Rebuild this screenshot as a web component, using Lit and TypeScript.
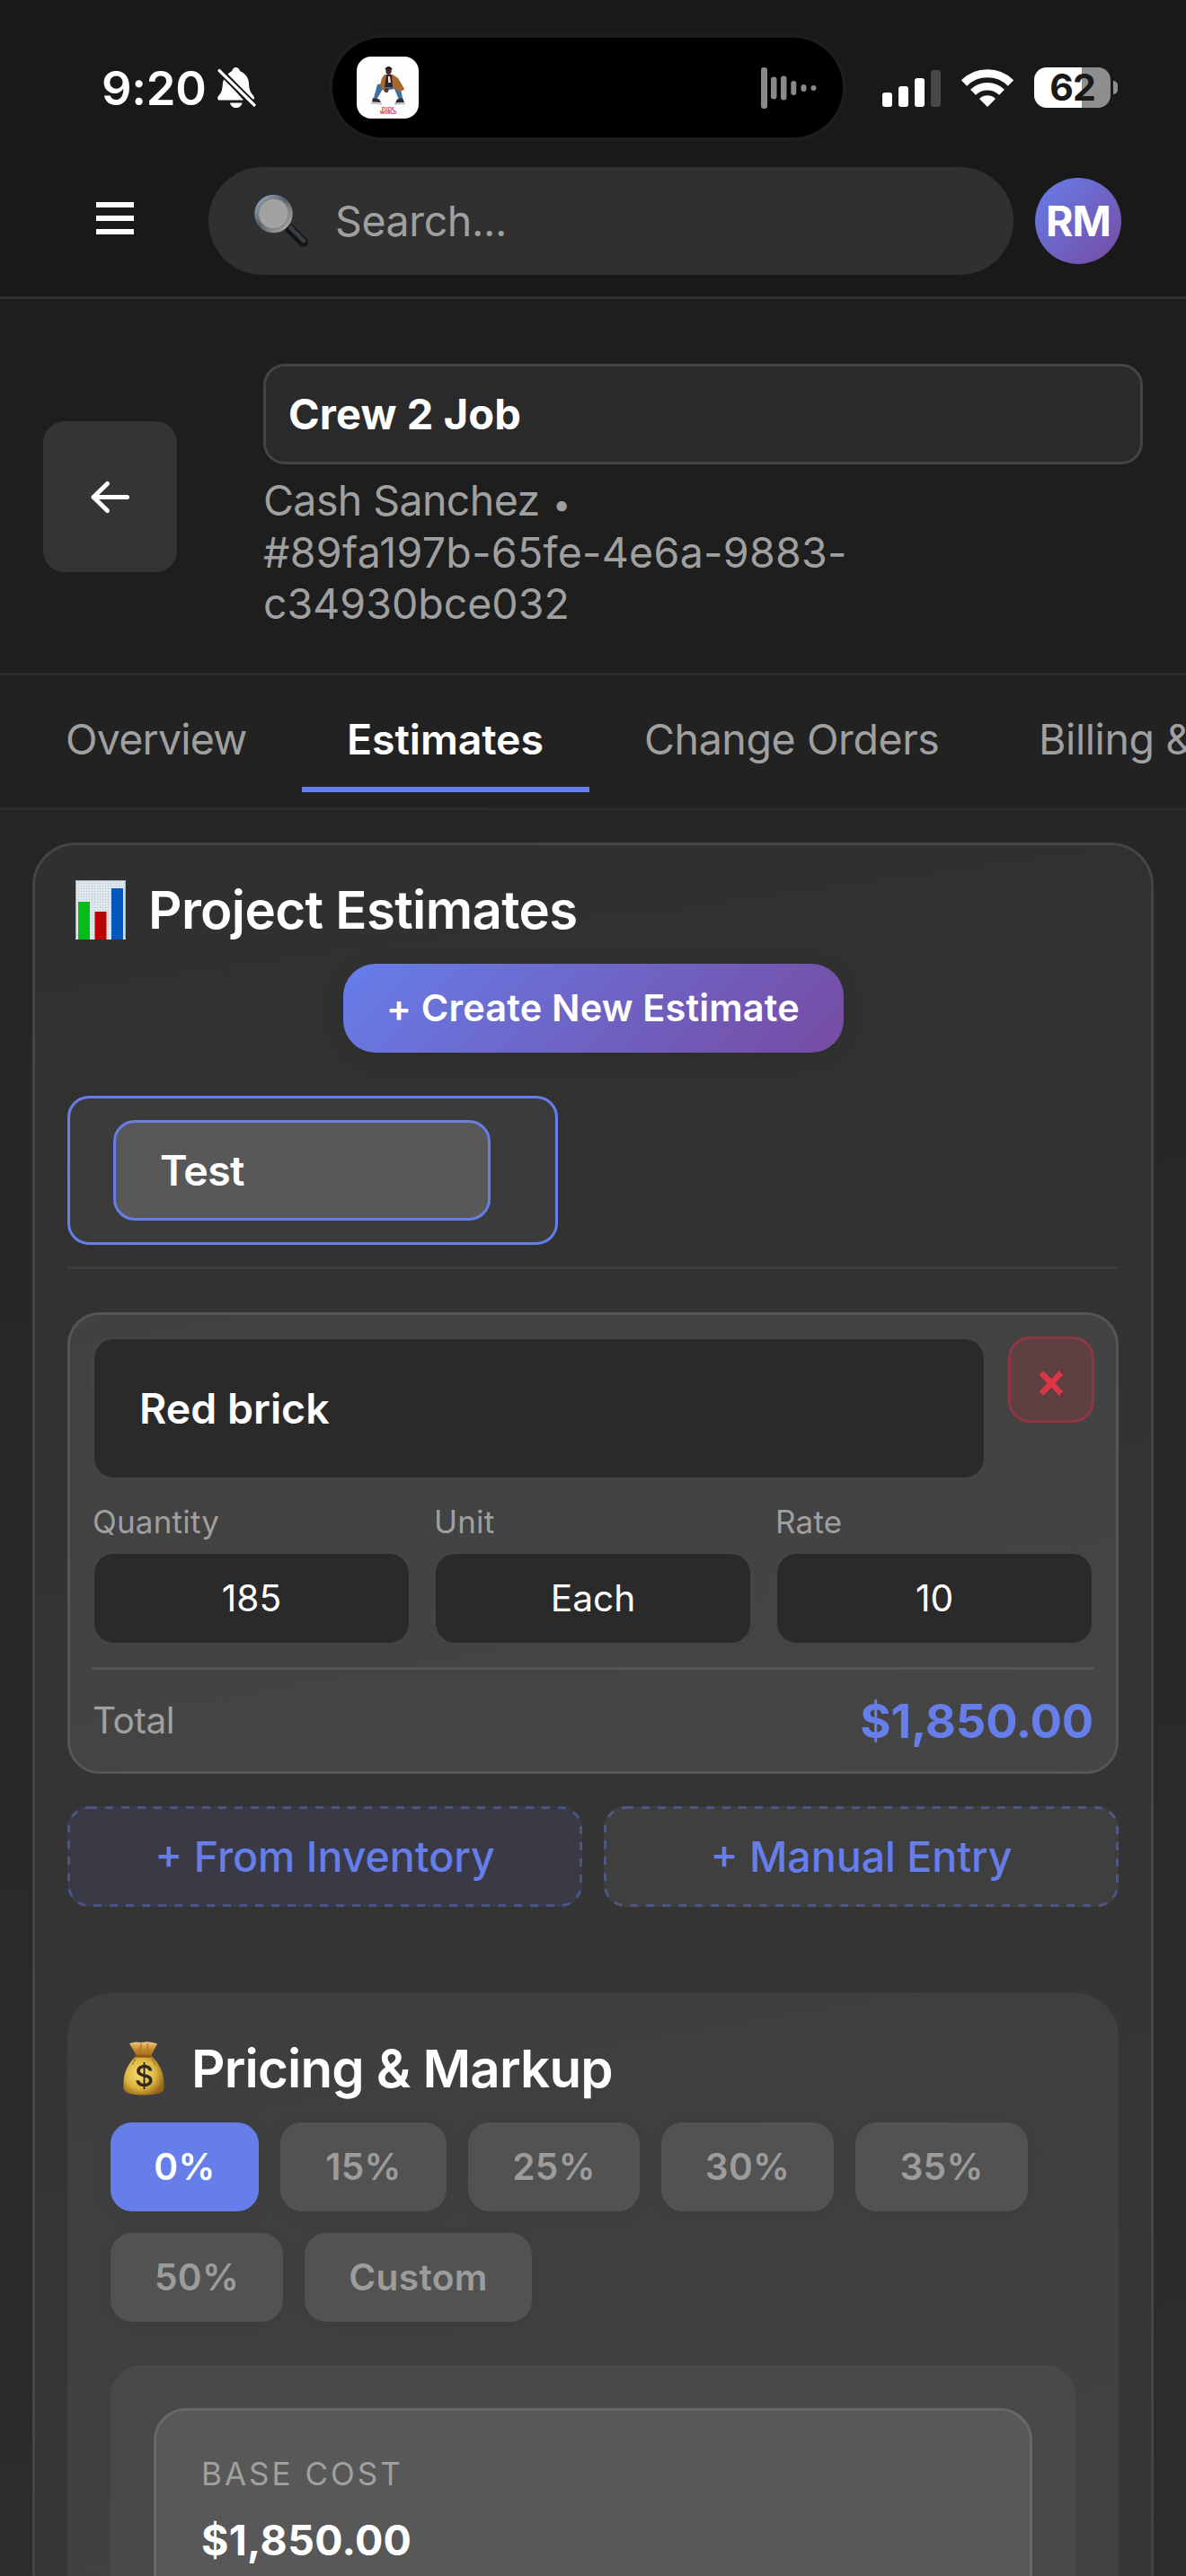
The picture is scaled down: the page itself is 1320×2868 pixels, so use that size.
import { LitElement, html, css, svg } from "lit";
import { customElement, property } from "lit/decorators.js";
import { classMap } from "lit/directives/class-map.js";

const base = css`
  *, *::before, *::after { box-sizing: border-box; }
  :host {
    display: block;
    font-family: Inter, "Liberation Sans", sans-serif;
    color: #fff;
    white-space: nowrap;
  }
  svg { display: block; flex: none; overflow: visible; }
`;

const bellOff = svg`
  <svg width="43" height="45" viewBox="0 0 43 45" fill="#fff">
    <path d="M6 17C6.500 15 6.900 13.600 7.500 12.500L29 36.500H2.500C0 36.500-.5 33.500 1.200 31.700C4.500 28.500 5.500 25 6 17Z"/>
    <path d="M11.500 7.500C13 6 14.500 5 16 4.200C17 1.500 18.500 0 20.500 0C22.500 0 24.200 1.500 25.200 4.200C31.500 6.800 34.800 12 35 18C35.300 25 37 28.500 40 31.500C41 32.600 41.200 33.800 40.800 35L39.500 36Z"/>
    <path d="M14 39.500H27.500C27 43 24 45 20.700 45C17.500 45 14.500 43 14 39.500Z"/>
    <path d="M2 3.500L41 42" stroke="#191919" stroke-width="7"/>
    <path d="M2 3.500L41 42" stroke="#fff" stroke-width="3.200" stroke-linecap="round"/>
  </svg>`;

const albumArt = svg`
  <svg width="69" height="69" viewBox="0 0 69 69">
    <rect width="69" height="69" rx="16" fill="#fdfdfd"/>
    <path d="M23 31L19 46L22 48L29 36L36 37L42 36L47 48L51 46L48 31L40 30H30Z" fill="#3c6f9f"/>
    <path d="M31 20L28 24L26 32L30 38L33 38L32 33H39L47 39L53 37L52 34L46 24L40 20Z" fill="#a8672c"/>
    <path d="M33 20H39L40 34H31Z" fill="#2e2430"/>
    <path d="M35 22H37L38 29H35Z" fill="#e9dfdd"/>
    <ellipse cx="35.500" cy="15.500" rx="3.200" ry="4.500" fill="#4a2d26"/>
    <path d="M31.500 14C31.500 10.500 40 10.500 39.500 14.500Z" fill="#211c22"/>
    <ellipse cx="33" cy="37.500" rx="2.500" ry="2.500" fill="#5a3528"/>
    <path d="M18 46L25 47.500L27 51L17 50.500Z" fill="#2d2a33"/>
    <path d="M45 47.500L51 46L53 51L43 51.500Z" fill="#2d2a33"/>
    <path d="M16 52L28 52.500M42 53L54 52" stroke="#b9b6b8" stroke-width="1.600"/>
    <text x="35" y="59.500" font-size="5" font-weight="800" text-anchor="middle" fill="#d84a52">FUCK</text>
    <text x="35" y="64" font-size="5" font-weight="800" text-anchor="middle" fill="#d84a52">WORLD</text>
  </svg>`;

const waveform = svg`
  <svg width="62" height="46" viewBox="0 0 62 46" fill="#8a8888">
    <rect x="0" y="0" width="7" height="46" rx="3"/>
    <rect x="11" y="10.500" width="6.500" height="25" rx="3.200"/>
    <rect x="22" y="9.500" width="6.500" height="27" rx="3.200"/>
    <rect x="33.300" y="15" width="6" height="16" rx="3"/>
    <rect x="44.500" y="19" width="6" height="8" rx="3"/>
    <circle cx="58.500" cy="23" r="3"/>
  </svg>`;

const signalBars = svg`
  <svg width="65" height="42" viewBox="0 0 65 42" fill="#fff">
    <rect x="0" y="26" width="11" height="16" rx="3"/>
    <rect x="18" y="19" width="11" height="23" rx="3"/>
    <rect x="36" y="10" width="11" height="32" rx="3"/>
    <rect x="54" y="1" width="11" height="41" rx="3" fill="#484848"/>
  </svg>`;

const wifi = svg`
  <svg width="58" height="42" viewBox="0 0 58 42" fill="none" stroke="#fff">
    <path d="M3 15.500A37 37 0 0 1 55 15.500" stroke-width="9"/>
    <path d="M13 25.700A23 23 0 0 1 45 25.700" stroke-width="8.500"/>
    <path d="M29 41L21 33A12 12 0 0 1 37 33Z" fill="#fff" stroke-width="1.500" stroke-linejoin="round"/>
  </svg>`;

const magnifier = svg`
  <svg width="60" height="58" viewBox="0 0 60 58">
    <defs>
      <linearGradient id="rim" x1="0" y1="0" x2="1" y2="1">
        <stop offset="0" stop-color="#9ab4c8"/><stop offset=".45" stop-color="#56606a"/><stop offset="1" stop-color="#b5b5b5"/>
      </linearGradient>
      <linearGradient id="grip" x1="0" y1="1" x2="1" y2="0">
        <stop offset="0" stop-color="#101214"/><stop offset=".5" stop-color="#3c4246"/><stop offset="1" stop-color="#0c0d0e"/>
      </linearGradient>
    </defs>
    <path d="M36 34L42 39" stroke="#777" stroke-width="6"/>
    <path d="M39.500 37.500L54.500 52.500" stroke="#111315" stroke-width="10.500" stroke-linecap="round"/>
    <path d="M40.500 36.500L55 51" stroke="url(#grip)" stroke-width="5" stroke-linecap="round"/>
    <circle cx="21.500" cy="21" r="19.200" fill="#a2a2a2" stroke="url(#rim)" stroke-width="4"/>
    <circle cx="21.500" cy="21" r="16.800" fill="none" stroke="#7b7f82" stroke-width="1.200"/>
  </svg>`;

const chartIcon = svg`
  <svg width="56" height="66" viewBox="0 0 56 66">
    <defs>
      <pattern id="grid" width="3" height="3" patternUnits="userSpaceOnUse">
        <rect width="3" height="3" fill="#e6ebef"/><path d="M0 0H3M0 0V3" stroke="#c0d0dc" stroke-width="1"/>
      </pattern>
    </defs>
    <rect width="56" height="66" fill="url(#grid)"/>
    <path d="M.5 65.500V.5H55.500V65.500" fill="none" stroke="#a9afb3"/>
    <rect x="3" y="24" width="13" height="42" fill="#06bc19"/>
    <rect x="21.500" y="35" width="13" height="31" fill="#ba0404"/>
    <rect x="40" y="9" width="13" height="57" fill="#0557bd"/>
  </svg>`;

const moneyBag = svg`
  <svg width="46" height="60" viewBox="0 0 46 60">
    <defs>
      <radialGradient id="bag" cx=".42" cy=".45" r=".62">
        <stop offset="0" stop-color="#f5e07a"/><stop offset=".6" stop-color="#dfb640"/><stop offset="1" stop-color="#94661a"/>
      </radialGradient>
      <linearGradient id="neck" x1="0" y1="0" x2="0" y2="1">
        <stop offset="0" stop-color="#efc98a"/><stop offset=".5" stop-color="#c98b2c"/><stop offset="1" stop-color="#a0661c"/>
      </linearGradient>
    </defs>
    <path d="M7 2L14 .5L20 1L27 .3L33 1L38 2.500L31 16H15Z" fill="url(#neck)"/>
    <path d="M15 16H31C39 22 45.500 34 45.500 46V52C45.500 57 37 59.500 23 59.500C9 59.500 .5 57 .5 52V46C.5 34 7 22 15 16Z" fill="url(#bag)"/>
    <path d="M14.500 16.500H31.500" stroke="#8a5a1c" stroke-width="2.500" stroke-linecap="round"/>
    <path d="M20 2L19 13M27 2L28 13M10 26L14 19M36 26L32 19" stroke="#a8722a" stroke-width="1.200"/>
    <text x="23" y="50" text-anchor="middle" font-family="Inter, sans-serif" font-size="33" font-weight="500" fill="#33291a">$</text>
  </svg>`;

const dashedFrame = svg`
  <svg class="frame" width="573" height="112" viewBox="0 0 573 112" fill="none">
    <rect x="1.500" y="1.500" width="570" height="109" rx="22.500" stroke="#667eea" stroke-opacity=".4" stroke-width="3" stroke-dasharray="9 9"/>
  </svg>`;

@customElement("status-bar")
class StatusBar extends LitElement {
  static styles = [base, css`
    .bar { display: flex; height: 186px; padding-top: 42px; align-items: flex-start; }
    .left { width: 370px; height: 111px; padding-left: 113px; display: flex; align-items: center; gap: 13px; }
    .time { font-size: 52.5px; font-weight: 600; letter-spacing: -0.3px; width: 116px; }
    .island {
      width: 568px; height: 111px; border-radius: 56px; background: #000; box-shadow: 0 0 0 4px #1d1d1d;
      display: flex; align-items: center; justify-content: space-between; padding: 0 29px 0 27px;
    }
    .right { height: 111px; display: flex; align-items: center; padding-left: 44px; gap: 23px; }
    .battery { display: flex; align-items: center; gap: 3px; }
    .cell {
      width: 85px; height: 45px; border-radius: 14px; background: linear-gradient(90deg, #fff 62%, #8e8e8e 62%);
      color: #191919; font-size: 41px; font-weight: 700; line-height: 45px; text-align: center; letter-spacing: -1px;
    }
    .nub { width: 5px; height: 15px; border-radius: 0 5px 5px 0; background: #8e8e8e; }
  `];
  render() {
    return html`<div class="bar">
      <div class="left"><span class="time">9:20</span>${bellOff}</div>
      <div class="island">${albumArt}${waveform}</div>
      <div class="right">${signalBars}${wifi}
        <div class="battery"><div class="cell">62</div><div class="nub"></div></div>
      </div>
    </div>`;
  }
}

@customElement("top-nav")
class TopNav extends LitElement {
  static styles = [base, css`
    .row { display: flex; align-items: center; height: 120px; padding-left: 107px; }
    .burger { width: 42px; height: 36px; border-block: 6px solid #fff; display: flex; align-items: center; margin-bottom: 6px; }
    .burger i { flex: 1; height: 6px; background: #fff; }
    .search {
      margin-left: 83px; width: 896px; height: 120px; border-radius: 60px; background: #303030;
      display: flex; align-items: center; gap: 30px; padding-left: 51px;
      font-size: 46.5px; color: #a0a0a0; letter-spacing: -0.4px;
    }
    .avatar {
      margin-left: 24px; width: 96px; height: 96px; border-radius: 50%;
      background: linear-gradient(135deg, #667eea, #764ba2);
      display: flex; align-items: center; justify-content: center; font-size: 46.5px; font-weight: 700; letter-spacing: -1px;
    }
  `];
  render() {
    return html`<div class="row">
      <div class="burger"><i></i></div>
      <div class="search">${magnifier}<span>Search...</span></div>
      <div class="avatar">RM</div>
    </div>`;
  }
}

@customElement("job-header")
class JobHeader extends LitElement {
  static styles = [base, css`
    .hero {
      height: 419px; padding: 72px 48px 0; display: flex; background: #1e1e1e; border-bottom: 3px solid #2a2a2a;
    }
    .back {
      width: 149px; height: 168px; margin: 64px 96px 0 0; border-radius: 24px; background: #343434;
      display: flex; align-items: center; justify-content: center;
    }
    .info { flex: 1; display: flex; flex-direction: column; gap: 12px; }
    .name {
      height: 112px; border: 3px solid #444; border-radius: 24px; background: #2a2a2a; padding: 0 25px;
      font-size: 47px; line-height: 106px; font-weight: 700; letter-spacing: 0.1px;
    }
    .meta { font-size: 46.5px; line-height: 57.6px; color: #a0a0a0; letter-spacing: -0.6px; }
    .meta div { height: 57.6px; }
    .meta .id { letter-spacing: 0.3px; }
    .meta .id-end { letter-spacing: 0; }
    .dot { font-size: 36px; margin-left: 2px; }
  `];
  render() {
    return html`<div class="hero">
      <div class="back">
        <svg width="43" height="35" viewBox="0 0 43 35" fill="none" stroke="#fff" stroke-width="5" stroke-linecap="round" stroke-linejoin="round">
          <path d="M40.500 17.500H3M18.500 2.500L3 17.500L18.500 32.500"/>
        </svg>
      </div>
      <div class="info">
        <div class="name">Crew 2 Job</div>
        <div class="meta"><div>Cash Sanchez <span class="dot">•</span></div><div class="id">#89fa197b-65fe-4e6a-9883-</div><div class="id-end">c34930bce032</div></div>
      </div>
    </div>`;
  }
}

@customElement("job-tabs")
class JobTabs extends LitElement {
  static styles = [base, css`
    .tabs { display: flex; gap: 12px; height: 150px; padding: 24px 0 0 24px; background: #222; border-bottom: 3px solid #2c2c2c; overflow: hidden; }
    .tab {
      flex: none; height: 106px; padding: 0 49px; font-size: 46.5px; line-height: 94px; color: #a0a0a0; letter-spacing: -0.4px;
    }
    .overview { width: 300px; letter-spacing: -0.8px; }
    .estimates { width: 320px; }
    .orders { width: 427px; }
    .active { padding-left: 50px; color: #fff; font-weight: 600; border-bottom: 6px solid #667eea; letter-spacing: -0.1px; }
  `];
  render() {
    return html`<div class="tabs">
      <div class="tab overview">Overview</div>
      <div class="tab estimates active">Estimates</div>
      <div class="tab orders">Change Orders</div>
      <div class="tab">Billing &amp;</div>
    </div>`;
  }
}

@customElement("line-item")
class LineItem extends LitElement {
  static styles = [base, css`
    .item { height: 514px; border: 3px solid #555; border-radius: 36px; background: linear-gradient(170deg, #414141, #454545); padding: 24px; }
    .top { display: flex; justify-content: space-between; height: 160px; }
    .name, .value { background: #2a2a2a; background-clip: padding-box; border: 3px solid #444; border-radius: 24px; }
    .name { width: 996px; padding-left: 50px; font-size: 46.5px; font-weight: 600; line-height: 154px; letter-spacing: 0; }
    .remove {
      width: 96px; height: 96px; border: 3px solid #8c3742; border-radius: 24px; background: #5e4042;
      display: flex; align-items: center; justify-content: center; padding-top: 7px;
    }
    .fields { display: grid; grid-template-columns: repeat(3, 1fr); gap: 24px; margin-top: 24px; }
    .label { height: 55px; padding-left: 1px; font-size: 35px; line-height: 44px; color: #9f9f9f; letter-spacing: 0.2px; }
    .value { height: 105px; line-height: 99px; font-size: 40.7px; text-align: center; }
    .total {
      margin-top: 24px; border-top: 3px solid #565656; display: flex; justify-content: space-between; align-items: center;
      height: 116px; padding: 0 1px;
    }
    .caption { font-size: 40.7px; color: #a0a0a0; letter-spacing: -0.5px; }
    .amount { font-size: 52.5px; font-weight: 700; color: #667eea; letter-spacing: -0.2px; }
  `];
  private fields = [["Quantity", "185"], ["Unit", "Each"], ["Rate", "10"]];
  render() {
    return html`<div class="item">
      <div class="top">
        <div class="name">Red brick</div>
        <div class="remove">
          <svg width="30" height="30" viewBox="0 0 30 30" stroke="#dc3545" stroke-width="6.500"><path d="M4 3.500L26 26.500M26 3.500L4 26.500"/></svg>
        </div>
      </div>
      <div class="fields">
        ${this.fields.map(([l, v]) => html`<div><div class="label">${l}</div><div class="value">${v}</div></div>`)}
      </div>
      <div class="total"><span class="caption">Total</span><span class="amount">$1,850.00</span></div>
    </div>`;
  }
}

@customElement("pricing-card")
class PricingCard extends LitElement {
  @property() selected = "0%";
  static styles = [base, css`
    .card { height: 800px; border-radius: 48px; background: linear-gradient(170deg, #3e3e3e, #434343); padding: 48px; }
    .title { display: flex; align-items: center; height: 72px; padding: 0 14px; gap: 30px; margin-bottom: 24px; font-size: 58.2px; font-weight: 600; letter-spacing: -0.8px; }
    .chips { display: flex; flex-wrap: wrap; gap: 24px; }
    .chip {
      height: 99px; border-radius: 24px; background: #525252; color: #9c9c9c; text-align: center;
      font-size: 40.7px; font-weight: 600; line-height: 99px; letter-spacing: 0.3px; box-shadow: 0 6px 24px rgba(0, 0, 0, 0.05);
    }
    .w0 { width: 165px; } .w1 { width: 185px; } .wm { width: 191px; } .w2 { width: 192px; } .w3 { width: 253px; }
    .on { background: #667eea; color: #fff; }
    .summary { margin-top: 48px; height: 400px; border-radius: 36px; background: #494949; padding: 48px; }
    .box { height: 400px; border: 3px solid #686868; border-radius: 36px; background: #585858; padding: 48px 50px; }
    .caption { font-size: 35px; line-height: 44px; color: #a0a0a0; letter-spacing: 3px; }
    .cost { margin-top: 23px; font-size: 46.5px; line-height: 58px; font-weight: 700; letter-spacing: 0.3px; }
  `];
  private chips: [string, string][] = [
    ["0%", "w0"], ["15%", "w1"], ["25%", "wm"], ["30%", "w2"], ["35%", "w2"], ["50%", "w2"], ["Custom", "w3"],
  ];
  render() {
    return html`<div class="card">
      <div class="title">${moneyBag}<span>Pricing &amp; Markup</span></div>
      <div class="chips">
        ${this.chips.map(([t, w]) => html`<div class=${classMap({ chip: true, [w]: true, on: t === this.selected })}>${t}</div>`)}
      </div>
      <div class="summary"><div class="box">
        <div class="caption">BASE COST</div>
        <div class="cost">$1,850.00</div>
      </div></div>
    </div>`;
  }
}

@customElement("app-root")
class AppRoot extends LitElement {
  static styles = [base, css`
    .page { width: 1320px; height: 2868px; overflow: hidden; background: #191919; display: flex; flex-direction: column; }
    .top { height: 333px; flex: none; border-bottom: 3px solid #303030; }
    job-header, job-tabs { flex: none; }
    .content { flex: 1; min-height: 0; padding: 36px 36px 0; background: linear-gradient(172deg, #252525, #2d2d2d); }
    .card {
      height: 2100px; border: 3px solid #454545; border-radius: 48px; padding: 36px;
      background: linear-gradient(172deg, #303030, #373737 1950px);
    }
    .title { display: flex; align-items: center; height: 72px; padding: 0 9px; gap: 25px; font-size: 58.2px; font-weight: 600; letter-spacing: -0.65px; }
    .create {
      width: 557px; height: 99px; margin: 24px auto 48px; border-radius: 36px; text-align: center;
      background: linear-gradient(135deg, #667eea, #764ba2); box-shadow: 0 6px 24px rgba(0, 0, 0, 0.08);
      font-size: 41.5px; font-weight: 600; line-height: 99px; letter-spacing: 0.15px;
    }
    .versions { border-bottom: 3px solid #3e3e3e; padding-bottom: 24px; margin-bottom: 48px; }
    .version { width: 546px; height: 166px; border: 3px solid #667eea; border-radius: 24px; background: #3b3b3b; padding: 24px 48px; }
    .version-name {
      width: 420px; height: 112px; border: 3px solid #667eea; border-radius: 24px; background: #585858; padding-left: 49px;
      font-size: 46.5px; font-weight: 600; line-height: 106px; letter-spacing: -0.7px;
    }
    .actions { display: grid; grid-template-columns: 1fr 1fr; gap: 24px; margin: 36px 0 96px; }
    .action {
      position: relative; height: 112px; border-radius: 24px; background: #3f3f3f; color: #667eea;
      font-size: 46.5px; font-weight: 500; line-height: 112px; text-align: center;
    }
    .frame { position: absolute; inset: 0; }
    .tinted { background: #393a46; }
  `];
  render() {
    return html`<div class="page">
      <div class="top"><status-bar></status-bar><top-nav></top-nav></div>
      <job-header></job-header>
      <job-tabs></job-tabs>
      <div class="content"><div class="card">
        <div class="title">${chartIcon}<span>Project Estimates</span></div>
        <div class="create">+ Create New Estimate</div>
        <div class="versions"><div class="version"><div class="version-name">Test</div></div></div>
        <line-item></line-item>
        <div class="actions">
          <div class="action tinted">${dashedFrame}+ From Inventory</div>
          <div class="action">${dashedFrame}+ Manual Entry</div>
        </div>
        <pricing-card></pricing-card>
      </div></div>
    </div>`;
  }
}
